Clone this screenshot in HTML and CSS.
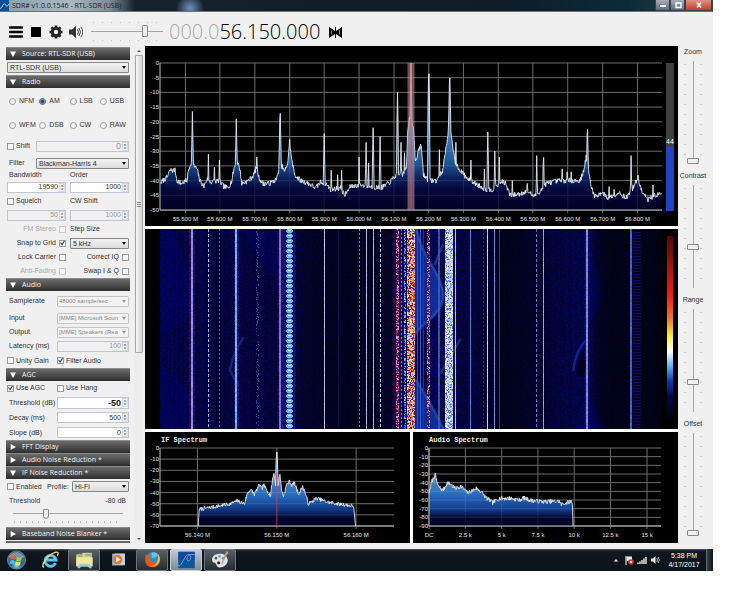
FILE: index.html
```html
<!DOCTYPE html>
<html lang="en">
<head>
    <meta charset="UTF-8">
    <meta name="viewport" content="width=device-width, initial-scale=1.0">
    <title>SDR# v1.0.0.1546 - RTL-SDR (USB)</title>
    <link rel="stylesheet" href="styles.css">
</head>
<body>
    <svg width="0" height="0" class="defs" aria-hidden="true">
        <symbol id="updown" viewBox="0 0 6 9">
            <rect x="0.5" y="0.5" width="5" height="8" fill="#f4f4f6" stroke="#c4c8d0" stroke-width="0.6"/>
            <path d="M1.5 3.6 3 1.8 4.5 3.6zM1.5 5.4 3 7.2 4.5 5.4z" fill="#6b7488"/>
        </symbol>
    </svg>

    <div class="desktop">
        <header class="titlebar">
            <svg class="app-icon" viewBox="0 0 9 11"><rect width="9" height="11" fill="#0d4f96"/><path d="M0 8C2 10 3 2 5 4s1 4 4 0" fill="none" stroke="#a8d8ff"/></svg>
            <span class="app-title">SDR# v1.0.0.1546 - RTL-SDR (USB)</span>
            <div class="window-buttons">
                <button aria-label="Minimize"><svg viewBox="0 0 10 8"><path d="M2 5h6" stroke="#fff" stroke-width="2"/></svg></button>
                <button aria-label="Restore"><svg viewBox="0 0 10 8"><path d="M3 2h5v4.500H3z" fill="none" stroke="#fff" stroke-width="1.400"/></svg></button>
                <button class="close" aria-label="Close"><svg viewBox="0 0 10 8"><path d="M3 1.500 7 6.500M7 1.500 3 6.500" stroke="#fff" stroke-width="1.600"/></svg></button>
            </div>
        </header>

        <div class="toolbar">
            <button aria-label="Menu"><svg viewBox="0 0 14 14"><path d="M0 2.500h14M0 7h14M0 11.500h14" stroke="#000" stroke-width="2.600"/></svg></button>
            <button aria-label="Stop"><svg viewBox="0 0 14 14"><path d="M2 2h10v10H2z"/></svg></button>
            <button aria-label="Settings"><svg viewBox="0 0 14 14"><circle cx="7" cy="7" r="3.700" fill="none" stroke="#222" stroke-width="3"/><path d="M7 .5v3M7 10.500v3M.5 7h3M10.500 7h3M2.400 2.400l2 2M9.600 9.600l2 2M11.600 2.400l-2 2M4.400 9.600l-2 2" stroke="#222" stroke-width="2.500"/></svg></button>
            <button aria-label="Mute"><svg viewBox="0 0 14 14"><path d="M0 4.500h3L7 1v12L3 9.500H0z" fill="#333"/><path d="M8.500 4.500q2 2.500 0 5M10 3q3 4 0 8M11.800 1.800q4 5.200 0 10.400" fill="none" stroke="#444"/></svg></button>
            <div class="volume"><input type="range" class="hrange" aria-label="Volume" value="78"></div>
            <div class="frequency"><span>000.0</span>56.150.000</div>
            <button aria-label="Center tuning"><svg viewBox="0 0 14 14"><path d="M1 2 7 6V2h1v4l6-4v11L8 9v4H7V9l-6 4z"/><path d="M3.500 5.500v4M11.500 5.500v4" stroke="#f0f0f0" stroke-width="0.600"/></svg></button>
        </div>

        <div class="workspace">
            <aside class="sidebar">
                <button class="section open">Source: RTL-SDR (USB)</button>
                <div class="row mid"><div class="select"><select aria-label="Source"><option>RTL-SDR (USB)</option></select></div></div>

                <button class="section open">Radio</button>
                <div class="modes">
                    <label><input type="radio" name="mode">NFM</label>
                    <label><input type="radio" name="mode" checked>AM</label>
                    <label><input type="radio" name="mode">LSB</label>
                    <label><input type="radio" name="mode">USB</label>
                    <label><input type="radio" name="mode">WFM</label>
                    <label><input type="radio" name="mode">DSB</label>
                    <label><input type="radio" name="mode">CW</label>
                    <label><input type="radio" name="mode">RAW</label>
                </div>
                <div class="row tall filter">
                    <label><input type="checkbox">Shift</label>
                    <div class="spin big off"><input type="text" value="0" aria-label="Shift" disabled><svg><use href="#updown"/></svg></div>
                </div>
                <div class="row filter">
                    <label class="text" for="filter">Filter</label>
                    <div class="select"><select id="filter"><option>Blackman-Harris 4</option></select></div>
                </div>
                <div class="row short halves">
                    <label class="text" for="bandwidth">Bandwidth</label>
                    <label for="order">Order</label>
                </div>
                <div class="row halves">
                    <div class="spin"><input type="text" id="bandwidth" value="19590"><svg><use href="#updown"/></svg></div>
                    <div class="spin"><input type="text" id="order" value="1000"><svg><use href="#updown"/></svg></div>
                </div>
                <div class="row halves">
                    <label><input type="checkbox">Squelch</label>
                    <label for="cwshift">CW Shift</label>
                </div>
                <div class="row halves">
                    <div class="spin off"><input type="text" value="50" aria-label="Squelch" disabled><svg><use href="#updown"/></svg></div>
                    <div class="spin off"><input type="text" id="cwshift" value="1000" disabled><svg><use href="#updown"/></svg></div>
                </div>
                <div class="row halves">
                    <label class="end muted">FM Stereo<input type="checkbox" disabled></label>
                    <label for="step">Step Size</label>
                </div>
                <div class="row halves">
                    <label class="end">Snap to Grid<input type="checkbox" checked></label>
                    <div class="select"><select id="step"><option>5 kHz</option></select></div>
                </div>
                <div class="row halves">
                    <label class="end">Lock Carrier<input type="checkbox"></label>
                    <label class="end">Correct IQ<input type="checkbox"></label>
                </div>
                <div class="row halves">
                    <label class="end muted">Anti-Fading<input type="checkbox" disabled></label>
                    <label class="end">Swap I &amp; Q<input type="checkbox"></label>
                </div>

                <button class="section open">Audio</button>
                <div class="row tall fields">
                    <label class="text" for="samplerate">Samplerate</label>
                    <div class="select off"><select id="samplerate" disabled><option>48000 sample/sec</option></select></div>
                </div>
                <div class="row fields">
                    <label class="text" for="input">Input</label>
                    <div class="select off"><select id="input" disabled><option>[MME] Microsoft Soun</option></select></div>
                </div>
                <div class="row fields">
                    <label class="text" for="output">Output</label>
                    <div class="select off"><select id="output" disabled><option>[MME] Speakers (Rea</option></select></div>
                </div>
                <div class="row fields">
                    <label class="text" for="latency">Latency (ms)</label>
                    <div class="spin off"><input type="text" id="latency" value="100" disabled><svg><use href="#updown"/></svg></div>
                </div>
                <div class="row mid fields">
                    <label><input type="checkbox">Unity Gain</label>
                    <label><input type="checkbox" checked>Filter Audio</label>
                </div>

                <button class="section open">AGC</button>
                <div class="row fields">
                    <label><input type="checkbox" checked>Use AGC</label>
                    <label><input type="checkbox">Use Hang</label>
                </div>
                <div class="row mid fields">
                    <label class="text" for="agc-threshold">Threshold (dB)</label>
                    <div class="spin big strong"><input type="text" id="agc-threshold" value="-50"><svg><use href="#updown"/></svg></div>
                </div>
                <div class="row mid fields">
                    <label class="text" for="decay">Decay (ms)</label>
                    <div class="spin"><input type="text" id="decay" value="500"><svg><use href="#updown"/></svg></div>
                </div>
                <div class="row mid fields">
                    <label class="text" for="slope">Slope (dB)</label>
                    <div class="spin"><input type="text" id="slope" value="0"><svg><use href="#updown"/></svg></div>
                </div>

                <button class="section">FFT Display</button>
                <button class="section">Audio Noise Reduction *</button>
                <button class="section open">IF Noise Reduction *</button>
                <div class="row mid profile">
                    <label><input type="checkbox">Enabled</label>
                    <label for="profile">Profile:</label>
                    <div class="select"><select id="profile"><option>Hi-Fi</option></select></div>
                </div>
                <div class="row level">
                    <label class="text" for="nr-threshold">Threshold</label>
                    <output for="nr-threshold">-80 dB</output>
                </div>
                <div class="nr-slider"><input type="range" class="hrange" id="nr-threshold" value="29"></div>
                <button class="section">Baseband Noise Blanker *</button>
                <div class="section-edge"></div>
            </aside>

            <div class="scrollbar"><i class="up"></i><div class="thumb"></div><i class="down"></i></div>

            <main class="displays">
                <section class="panel spectrum">
                    <svg class="chart" data-chart="main"></svg>
                    <div class="meter"><span>44</span><div class="meter-fill"></div></div>
                </section>
                <section class="panel waterfall">
                    <canvas id="waterfall"></canvas>
                    <div class="palette"></div>
                </section>
                <div class="pair">
                    <section class="panel small"><h2>IF Spectrum</h2><svg class="chart" data-chart="ifs"></svg></section>
                    <section class="panel small"><h2>Audio Spectrum</h2><svg class="chart" data-chart="audio"></svg></section>
                </div>
            </main>

            <div class="controls">
                <label>Zoom<span class="vslider"><input type="range" value="0"></span></label>
                <label>Contrast<span class="vslider"><input type="range" value="39"></span></label>
                <label>Range<span class="vslider"><input type="range" value="28"></span></label>
                <label>Offset<span class="vslider"><input type="range" value="0"></span></label>
            </div>
        </div>

        <footer class="taskbar">
            <button aria-label="Start">
                <svg viewBox="0 0 22 22"><defs><radialGradient id="orb" cy="0.8"><stop offset="0" stop-color="#6fe0f0"/><stop offset="0.6" stop-color="#1e6695"/><stop offset="1" stop-color="#456a86"/></radialGradient></defs><circle cx="11" cy="11" r="10" fill="url(#orb)" stroke="#8fa9b8" stroke-width="0.6"/><path d="M2 8Q11-3 20 8 11 11 2 8" fill="#fff" opacity="0.3"/><path d="M5 7q3-2 5.500 0l-1 4q-2.500-2-5.500 0z" fill="#f2602b"/><path d="M11.500 7.500q2.500 2 5.500 0l-1 4q-3 2-5.500 0z" fill="#9bd04a"/><path d="M4 12q3-2 5.300 0l-1 4q-2.300-1.500-5 0z" fill="#4cb5f0"/><path d="M10.200 12.500q2.500 2 5.500 0l-1 4q-3 1.500-5.500 0z" fill="#fbd545"/></svg>
            </button>
            <button aria-label="Internet Explorer">
                <svg viewBox="0 0 22 22"><path d="M16.500 14.500A6 6 0 1 1 17 11H7" fill="none" stroke="#5cc6f2" stroke-width="3.200"/><path d="M4 19C-1 18 8 5 16 2.500c4-1 4 1 2.500 4" fill="none" stroke="#f0e06a" stroke-width="1.400"/></svg>
            </button>
            <button class="running" aria-label="Explorer">
                <svg viewBox="0 0 22 22"><path d="M2 5h6l1-2h10v15H2z" fill="#e8cf76"/><path d="M4 4h5v4H4zM12 4h6v3h-6z" fill="#8fb98a"/><path d="M2 8h18v10H2z" fill="#f3e7a4"/><path d="M5 15h12l2 5h-3l-1-2H7l-1 2H3z" fill="#9ad0dd"/></svg>
            </button>
            <button aria-label="Media Player">
                <svg viewBox="0 0 22 22"><path d="M4 4h14v13H4z" fill="#9db4c8"/><path d="M7 4h11v12H7z" fill="#c4d2de"/><circle cx="10" cy="10.500" r="5.200" fill="#e9742a"/><path d="M8.500 7.500v6l5-3z" fill="#fff"/></svg>
            </button>
            <button class="running" aria-label="Firefox">
                <svg viewBox="0 0 22 22"><circle cx="11.500" cy="9.500" r="7.500" fill="#2d8fc7"/><path d="M10 3q5-2 8 3l-4 2-4 1z" fill="#62c6e8"/><path d="M3.500 4q1 2 3 2 3-1 4 1-3 1-2.500 4 2 3 5.500 1 1 2-2 3.500 6 0 5.500-6 0-4-2-6 4 3 4 7.500 0 8-8 8t-8-8q0-4 .5-7z" fill="#e8571e"/><path d="M17 4q4 5 1 10-3 5-9 4 9-1 8-14" fill="#f6b53c"/></svg>
            </button>
            <button class="active" aria-label="SDR#">
                <svg viewBox="0 0 22 22"><path d="M2 2h18v18H2z" fill="#0b55a0"/><path d="M2 2h18v9H2z" fill="#16479a"/><path d="M2 17C5 20 9 5 13 5s3 7 0 7-1-6 2-7 4 1 5 0" fill="none" stroke="#8bc6f2" stroke-width="0.800"/></svg>
            </button>
            <button class="running" aria-label="Paint">
                <svg viewBox="0 0 22 22"><path d="M10 4C4 4 1 8 2 12c1 3 3 1 4 3 1 3 2 5 6 4 5-1 7-5 7-8-1-5-4-7-9-7" fill="#dfe3e4"/><circle cx="6" cy="9" r="1.500" fill="#555e62"/><circle cx="10" cy="7" r="1.400" fill="#7b9fae"/><circle cx="14" cy="9" r="1.400" fill="#6d7b6c"/><circle cx="9" cy="14" r="1.700" fill="#1f272b"/><path d="M18 1q3 2 0 4l-5 11-1-1 4-11z" fill="#b3a48f"/></svg>
            </button>
            <div class="tray">
                <svg viewBox="0 0 10 10"><path d="M3 6.500 5 4l2 2.500z" fill="#eee"/></svg>
                <svg viewBox="0 0 10 10"><path d="M2 1v9" stroke="#fff"/><path d="M2.500 1.500H8V6H2.500z" fill="#e8e8e8"/><circle cx="7" cy="7" r="2.800" fill="#d33a3a"/><path d="M6 6l2 2M8 6 6 8" stroke="#fff" stroke-width="0.800"/></svg>
                <svg viewBox="0 0 10 10"><path d="M1 9V7.500M3 9V6.500M5 9V5M7 9V3.500M9 9V2" stroke="#eee" stroke-width="1.400"/></svg>
                <svg viewBox="0 0 10 10"><path d="M1 3.500h2L5.500 1v8L3 6.500H1z" fill="#eee"/><path d="M6.800 3q1.500 2 0 4M8.200 2q2.200 3 0 6" fill="none" stroke="#ddd" stroke-width="0.800"/></svg>
                <div class="clock"><time>5:38 PM</time><time>4/17/2017</time></div>
                <button class="show-desktop" aria-label="Show desktop"></button>
            </div>
        </footer>
    </div>
    <script src="app.js"></script>
</body>
</html>
```

FILE: styles.css
```css
* {
    box-sizing: border-box;
}
body {
    margin: 0;
    background: #fefefe;
    color: #333;
    font-family: "Liberation Sans", Arial, sans-serif;
    font-size: 7px;
    line-height: 10px;
}
button, input, select {
    font: inherit;
    color: inherit;
    margin: 0;
    padding: 0;
}
button {
    border: none;
    background: none;
}
button svg {
    display: block;
}
.defs {
    position: absolute;
}
.desktop {
    margin-right: 24px;
    background: #f0f0f0;
}

/* title bar */
.titlebar {
    display: flex;
    height: 12px;
    background:
        radial-gradient(circle at 190px 8px, #6f93bd 0, transparent 14px),
        linear-gradient(90deg, #8a9eac 0, #a9b8c2 70px, #7c8c98 110px, #15222d 135px, #101c28 70%, #0b2a37 88%, #39434b);
    border-bottom: 1px solid #66727b;
}
.app-icon {
    width: 9px;
    height: 11px;
}
.app-title {
    margin-left: 3px;
    font-family: "Open Sans", sans-serif;
    line-height: 11px;
    color: #222;
}
.window-buttons {
    display: flex;
    margin-left: auto;
    margin-right: 1px;
}
.window-buttons button {
    width: 15px;
    height: 11px;
    background: linear-gradient(#a5afb8, #5d6a76);
    border: 1px solid #394049;
    border-top: none;
    border-radius: 0 0 0 2px;
}
.window-buttons .close {
    width: 27px;
    background: linear-gradient(#dc9485, #c13a25);
    border-radius: 0 0 2px 0;
}
.window-buttons svg {
    width: 10px;
    height: 8px;
    margin: 0 auto;
}

/* toolbar */
.toolbar {
    display: flex;
    align-items: center;
    gap: 6px;
    height: 35px;
    padding: 4px 0 0 9px;
}
.toolbar button svg {
    width: 14px;
    height: 14px;
}
.volume {
    width: 72px;
    height: 21px;
    margin-left: 2px;
    padding: 3px 0;
    background:
        repeating-linear-gradient(90deg, #c4c4c4 0 1px, transparent 1px 9px) 2px 1px / 100% 1px no-repeat,
        repeating-linear-gradient(90deg, #c4c4c4 0 1px, transparent 1px 9px) 2px 19px / 100% 1px no-repeat;
}
.frequency {
    margin-right: 2px;
    font-family: "Open Sans", sans-serif;
    font-weight: 300;
    font-size: 20px;
    line-height: 24px;
    color: #000;
}
.frequency span {
    color: #aaa;
}
.hrange {
    display: block;
    appearance: none;
    width: 100%;
    height: 14px;
    background: linear-gradient(#a8a8a8, #a8a8a8) center / 100% 1px no-repeat;
}
.hrange::-webkit-slider-thumb {
    appearance: none;
    width: 6px;
    height: 12px;
    background: #eee;
    border: 1px solid #8c8c8c;
    border-radius: 1px;
}

/* left panel */
.workspace {
    display: flex;
    align-items: flex-start;
    padding-bottom: 6px;
}
.sidebar {
    width: 124px;
    margin-left: 6px;
}
.section {
    display: flex;
    align-items: center;
    width: 100%;
    height: 13px;
    padding-left: 4px;
    background: linear-gradient(#6c6c6c, #2e2e2e);
    color: #f2f2f2;
    font-family: "Open Sans", sans-serif;
    border-top: 1px solid #8a8a8a;
}
.section::before {
    content: "";
    width: 6px;
    height: 6px;
    margin-right: 6px;
    background: #fff;
    clip-path: polygon(10% 0, 100% 50%, 10% 100%);
}
.section.open::before {
    clip-path: polygon(0 10%, 100% 10%, 50% 100%);
}
.section-edge {
    height: 2px;
    margin-top: 1px;
    background: #666;
}
.row {
    display: grid;
    align-items: center;
    height: 14px;
    padding: 0 1px;
}
.row.short { height: 10px; }
.row.mid { height: 15px; }
.row.tall { height: 20px; }
.filter { grid-template-columns: 29px 1fr; }
.halves { grid-template-columns: 1fr 1fr; column-gap: 4px; }
.fields { grid-template-columns: 50px 1fr; }
.profile { grid-template-columns: 40px 25px 1fr; }
.level {
    grid-template-columns: 1fr auto;
    padding-right: 4px;
}
.row > * {
    min-width: 0;
}
.row label, .modes label {
    display: flex;
    align-items: center;
    gap: 2px;
    white-space: nowrap;
}
.row .text {
    padding-left: 2px;
}
.row .end {
    justify-content: flex-end;
    gap: 3px;
}
.row .muted {
    color: #aaa;
}
.modes {
    display: grid;
    grid-template-columns: repeat(4, 1fr);
    grid-auto-rows: 24px;
    padding: 1px 0 0 3px;
    margin-bottom: -1px;
}
.modes label {
    gap: 3px;
}
input[type="checkbox"], input[type="radio"] {
    appearance: none;
    flex: none;
    width: 7px;
    height: 7px;
    background: #f6f6f6;
    border: 1px solid #9a9a9a;
}
input[type="radio"] {
    border-radius: 50%;
}
input[type="radio"]:checked {
    background: radial-gradient(circle, #24467c 0 1px, #b7cbe2 3px);
    border-color: #56657a;
}
input[type="checkbox"]:disabled {
    border-color: #ccc;
}
input[type="checkbox"]:checked::before {
    content: "";
    display: block;
    width: 5px;
    height: 5px;
    background: #34497c;
    clip-path: polygon(0 45%, 20% 35%, 40% 60%, 80% 0, 100% 10%, 45% 100%);
}
.select {
    position: relative;
}
.select select {
    display: block;
    appearance: none;
    width: 100%;
    height: 11px;
    padding-left: 2px;
    background: linear-gradient(#f2f2f2, #dcdcdc);
    border: 1px solid #868686;
    border-radius: 1px;
    line-height: 9px;
    opacity: 1;
}
.select::after {
    content: "";
    position: absolute;
    right: 3px;
    top: 4px;
    border: 2px solid transparent;
    border-top: 3px solid #111;
    border-bottom: none;
}
.select.off select {
    background: #f3f3f3;
    border-color: #c4c4c4;
    color: #888;
    padding-left: 1px;
    font-size: 6px;
}
.select.off::after {
    border-top-color: #999;
}
.spin {
    display: flex;
    align-items: center;
    height: 11px;
    background: #fff;
    border: 1px solid #c2c6cc;
}
.spin input {
    flex: 1;
    width: 0;
    min-width: 0;
    height: 9px;
    border: none;
    background: none;
    text-align: right;
    padding-right: 1px;
}
.spin svg {
    flex: none;
    width: 6px;
    height: 9px;
}
.spin.big {
    font-size: 9px;
}
.spin.strong {
    height: 12px;
    font-weight: bold;
    color: #111;
}
.spin.off {
    background: #f0f0f0;
    color: #999;
}
.nr-slider {
    height: 19px;
    padding: 0 7px;
    background: repeating-linear-gradient(90deg, #bbb 0 1px, transparent 1px 6px) 8px 13px / 106px 2px no-repeat;
}
.nr-slider .hrange {
    height: 11px;
}
.nr-slider .hrange::-webkit-slider-thumb {
    height: 10px;
    border-radius: 1px 1px 3px 3px;
}
.scrollbar {
    display: flex;
    flex-direction: column;
    align-items: center;
    align-self: stretch;
    width: 9px;
    margin-left: 4px;
    background: #ececec;
}
.scrollbar i {
    border: 2px solid transparent;
    margin: 3px 0;
}
.scrollbar .up { border-bottom-color: #555; border-top: none; }
.scrollbar .down { border-top-color: #555; border-bottom: none; margin-top: auto; }
.scrollbar .thumb {
    width: 8px;
    height: 298px;
    background: linear-gradient(90deg, #f7f7f7, #d4d4d4);
    border: 1px solid #a6a6a6;
    border-radius: 1px;
}
.scrollbar .thumb::before {
    content: "";
    display: block;
    width: 4px;
    height: 5px;
    margin: 146px auto 0;
    background: repeating-linear-gradient(#888 0 1px, transparent 1px 2px);
}

/* spectrum and waterfall */
.displays {
    flex: 1;
    min-width: 0;
    display: flex;
    flex-direction: column;
    gap: 3px;
    margin: -1px 0 0 2px;
    background: #fff;
}
.panel {
    position: relative;
    background: #000;
    overflow: hidden;
}
.chart {
    display: block;
    width: 100%;
    height: 100%;
}
.chart text {
    fill: #e4e4e4;
    font-size: 6px;
}
.chart .x {
    text-anchor: middle;
}
.chart .y {
    text-anchor: end;
}
.spectrum { height: 180px; }
.waterfall { height: 200px; }
#waterfall {
    display: block;
    width: 100%;
    height: 100%;
}
.meter {
    position: absolute;
    right: 4px;
    top: 17px;
    width: 8px;
    height: 148px;
    background: #404040;
    display: flex;
    flex-direction: column;
    justify-content: flex-end;
    text-align: center;
    color: #fff;
}
.meter-fill {
    height: 43%;
    background: #2442c4;
}
.palette {
    position: absolute;
    right: 5px;
    top: 7px;
    width: 6px;
    height: 186px;
    background: linear-gradient(#550808 0, #8c1010 12%, #f01c1c 32%, #f07030 44%, #f8f040 54%, #fff 62%, #60b0f8 70%, #1038b0 78%, #000850 86%, #000 100%);
}
.pair {
    display: grid;
    grid-template-columns: 1fr 1fr;
    gap: 3px;
}
.small {
    height: 111px;
}
.small h2 {
    position: absolute;
    left: 16px;
    top: 3px;
    margin: 0;
    font: bold 7px/10px "Liberation Mono", monospace;
    color: #eee;
}

/* right sliders */
.controls {
    width: 35px;
    padding-right: 5px;
}
.controls label {
    display: flex;
    flex-direction: column;
    align-items: center;
    height: 124px;
}
.vslider {
    width: 18px;
    height: 103px;
    margin-top: 4px;
    background:
        repeating-linear-gradient(#c8c8c8 0 1px, transparent 1px 10px) 0 3px / 2px 98px no-repeat,
        repeating-linear-gradient(#c8c8c8 0 1px, transparent 1px 10px) 16px 3px / 2px 98px no-repeat;
}
.vslider input {
    display: block;
    appearance: none;
    writing-mode: vertical-lr;
    direction: rtl;
    width: 12px;
    height: 103px;
    margin: 0 auto;
    background: linear-gradient(#aaa, #aaa) center / 1px 100% no-repeat;
}
.vslider input::-webkit-slider-thumb {
    appearance: none;
    width: 12px;
    height: 6px;
    background: #f0f0f0;
    border: 1px solid #8a8a8a;
    border-radius: 1px;
}

/* taskbar */
.taskbar {
    display: flex;
    align-items: stretch;
    gap: 2px;
    height: 22px;
    background: linear-gradient(#4e5962 0, #10181f 2px, #0c1219);
}
.taskbar > button {
    width: 32px;
    border-radius: 2px;
}
.taskbar > button svg {
    width: 21px;
    height: 20px;
    margin: 0 auto;
}
.taskbar .running {
    background: linear-gradient(#555f66, #262c31);
    border: 1px solid #6c747a;
}
.taskbar .active {
    background: linear-gradient(#c0ccd6, #7d8892);
    border: 1px solid #c4ced6;
}
.tray {
    display: flex;
    align-items: center;
    gap: 3px;
    margin-left: auto;
    color: #fff;
}
.tray svg {
    width: 10px;
    height: 10px;
}
.clock {
    width: 38px;
    margin-left: 2px;
    text-align: center;
    line-height: 9px;
}
.clock time {
    display: block;
}
.show-desktop {
    width: 7px;
    height: 22px;
    background: linear-gradient(90deg, #3a434a, #0e1318);
    border-left: 1px solid #59636a;
}
```

FILE: app.js
```js
// small seeded generator so every redraw shows the same noise
function makeRandom(seed) {
    return () => {
        seed = (seed * 1664525 + 1013904223) % 4294967296;
        return seed / 4294967296;
    };
}

// floor and peaks are [bin, dB] pairs
const charts = {
    main: {
        bins: [159, 662], pad: [15, 17, 16, 16], min: -50, step: 5, noise: 1.8,
        ticks: [[184.5, '55.500 M'], [219, '55.600 M'], [254, '55.700 M'], [289, '55.800 M'], [323.5, '55.900 M'], [358.5, '56.000 M'], [393.5, '56.100 M'], [428.3, '56.200 M'], [463, '56.300 M'], [498, '56.400 M'], [532.6, '56.500 M'], [567.5, '56.600 M'], [602.6, '56.700 M'], [637.5, '56.800 M']],
        colors: [[0, '#cfe6ff'], [0.5, '#4a94e0'], [0.68, '#2868b4'], [0.78, '#0e2a70'], [0.86, '#040848'], [1, '#000028']],
        floor: [[159, -41], [162, -40], [166, -39], [169, -36.5], [174, -36.5], [176, -40], [180, -41], [186, -40], [188, -36], [190, -34], [193, -35], [196, -36], [199, -40], [203, -42], [206, -39.5], [210, -40.5], [218, -40], [223, -42], [227, -42.5], [231, -40], [233, -36], [236, -33], [239, -36], [241, -41], [248, -40], [253, -38], [256, -35], [258, -39], [262, -41], [269, -41], [276, -39.5], [278, -36], [281, -35], [284, -37], [287, -34], [289, -27], [291, -33], [294, -38], [300, -40], [308, -41], [315, -42.5], [320, -40.5], [325, -41], [330, -43], [340, -42.5], [344, -45], [350, -42], [360, -41.5], [370, -42], [380, -42.5], [388, -41], [396, -38], [402, -38], [406, -36], [407, -24], [409, -18], [413, -22], [415, -34], [418, -30], [420, -28], [421, -29], [423, -38], [428, -40], [436, -40], [442, -37], [446, -28], [449, -20], [452, -28], [455, -34], [460, -36.5], [466, -39], [475, -41], [480, -42], [486, -43], [493, -43], [502, -40], [505, -41], [510, -45], [520, -44.5], [527, -43.5], [534, -45.5], [540, -43.5], [546, -41], [552, -40.5], [560, -40], [570, -40], [580, -40], [584, -36], [586, -32], [588, -36], [591, -42], [595, -45.5], [602, -44], [608, -46], [619, -44], [626, -46], [632, -43], [638, -39], [642, -44], [648, -46.5], [655, -45], [662, -44.5]],
        peaks: [[191.5, -16.5], [207.5, -31], [213.5, -35.5], [218.5, -33], [235.5, -19], [256, -32], [279.3, -13.5], [289, -26], [323.5, -24], [330.5, -36.5], [337, -38], [341, -36.5], [358.5, -32], [365.5, -27], [368, -34], [372.5, -22], [379.5, -25], [397, -10], [400.5, -27], [404, -30.5], [410.5, 0], [428.3, 0], [439, -29.5], [449.3, -1.5], [455.5, -27], [470.5, -33], [484, -36], [487.5, -23.5], [494.5, -30], [499, -32], [512, -40], [527, -41], [536.5, -31.5], [543.3, -28.5], [562, -36], [567, -37], [571, -37], [587.3, -19], [609, -42], [614, -43], [631, -31.5], [653, -41.5]],
        band: [407, 414]
    },
    ifs: {
        bins: [160, 393], pad: [15, 16, 16, 17], min: -70, step: 10, noise: 3.5,
        ticks: [[197.3, '56.140 M'], [276.3, '56.150 M'], [355.3, '56.160 M']],
        colors: [[0, '#8cc0f4'], [0.4, '#5aa4f2'], [0.62, '#2c7fe4'], [0.8, '#123f96'], [0.9, '#020838'], [1, '#00002c']],
        floor: [[198, -70], [199, -55], [213, -53], [230, -50], [237, -47.5], [244, -50], [247, -41], [250, -37], [254, -41.5], [259, -33], [261.5, -37], [263, -33], [270, -43], [272, -28], [273.5, -23], [275, -33], [275.8, -22], [276.8, -38], [279.3, -22], [281, -38], [283, -43], [286, -33], [289, -30], [291.5, -34], [293.5, -31], [298, -41], [302, -35], [304, -38], [307.5, -50], [310, -49], [316, -45], [326.5, -48.5], [340, -50.5], [352.7, -52], [353.7, -60], [354.7, -70]],
        peaks: [[276.3, 0]],
        center: 276.3
    },
    audio: {
        bins: [428, 661], pad: [16, 16, 17, 17], min: -90, step: 10, noise: 5,
        ticks: [[428, 'DC'], [464.5, '2.5 k'], [501, '5 k'], [537.4, '7.5 k'], [573.8, '10 k'], [610.2, '12.5 k'], [647, '15 k']],
        colors: [[0.3, '#9ccaf0'], [0.45, '#5a9cdc'], [0.6, '#2f80e4'], [0.78, '#1a4cae'], [0.9, '#020838'], [1, '#00002c']],
        floor: [[428, -52], [431, -38], [434.3, -31], [437, -44], [442, -49], [446.7, -40], [450, -42], [454.6, -47], [460, -44], [467, -52], [475.6, -46.5], [481, -51], [485, -57], [492, -63], [499, -58], [509, -58], [519, -60], [523, -57.5], [530, -60.5], [543.5, -62], [559, -61.5], [560.7, -65], [571, -61.5], [572, -65], [572.7, -90]],
        peaks: []
    }
};

function floorAt(points, bin) {
    for (let i = 1; i < points.length; i++) {
        if (bin <= points[i][0]) {
            const [x0, y0] = points[i - 1];
            const [x1, y1] = points[i];
            return y0 + (y1 - y0) * (bin - x0) / (x1 - x0);
        }
    }
    return points[points.length - 1][1];
}

function drawChart(svg) {
    const name = svg.dataset.chart;
    const c = charts[name];
    const box = svg.getBoundingClientRect();
    const [left, top, right, bottom] = c.pad;
    const x1 = box.width - right;
    const y1 = box.height - bottom;
    const X = bin => left + (bin - c.bins[0]) / (c.bins[1] - c.bins[0]) * (x1 - left);
    const Y = db => top + db / c.min * (y1 - top);
    const random = makeRandom(7);

    const start = c.floor[0][0];
    const end = c.floor[c.floor.length - 1][0];
    let line = '';
    for (let bin = start; bin <= end; bin += 0.5) {
        let db = floorAt(c.floor, bin);
        if (bin > start + 1 && bin < end - 2) db += (random() - 0.5) * c.noise;
        for (const [at, level] of c.peaks) {
            const d = Math.abs(bin - at);
            if (d < 1) db = Math.max(db, level - d * 18);
        }
        line += `${line ? 'L' : 'M'}${X(bin).toFixed(1)} ${Y(Math.max(db, c.min)).toFixed(1)}`;
    }
    line += `L${X(end)} ${Y(c.floor[c.floor.length - 1][1])}`;

    let out = `<defs><linearGradient id="fill-${name}" gradientUnits="userSpaceOnUse" x1="0" x2="0" y1="${top}" y2="${y1}">`;
    out += c.colors.map(([at, color]) => `<stop offset="${at}" stop-color="${color}"/>`).join('');
    out += '</linearGradient></defs>';
    for (let db = 0; db >= c.min; db -= c.step) {
        out += `<path d="M${left} ${Y(db)}H${x1}" stroke="#6c6c6c"/>`;
        out += `<text class="y" x="${left - 1}" y="${Y(db) + 2}">${db}</text>`;
    }
    for (const [bin, label] of c.ticks) {
        out += `<path d="M${X(bin)} ${top}V${y1 + 3}" stroke="#6c6c6c"/>`;
        out += `<text class="x" x="${X(bin)}" y="${y1 + 11}">${label}</text>`;
    }
    out += `<path d="${line}L${X(end)} ${y1}L${X(start)} ${y1}Z" fill="url(#fill-${name})" fill-opacity="0.82"/>`;
    out += `<path d="M${left} ${top}V${y1}H${x1}" fill="none" stroke="#c0c0c0"/>`;
    out += `<path d="${line}" fill="none" stroke="#e4eaf2" stroke-width="0.9"/>`;
    if (c.band) {
        const [a, b] = c.band.map(X);
        out += `<rect x="${a}" y="${top}" width="${b - a}" height="${y1 - top}" fill="#c8969e" fill-opacity="0.55"/>`;
        out += `<path d="M${(a + b) / 2} ${top}V${y1}" stroke="#d84848" stroke-opacity="0.5"/>`;
    }
    if (c.center) {
        out += `<path d="M${X(c.center)} ${Y(-22)}V${y1}" stroke="#c83050" stroke-opacity="0.8"/>`;
    }
    svg.innerHTML = out;
}

// [bin, width, kind, color]
const signals = [
    [191.5, 6, 'soft', '80,20,90'], [191.5, 2, 'solid', '150,150,245'],
    [207.5, 1, 'dash', '170,190,255'], [218.5, 1, 'dots', '120,150,220'],
    [235.5, 5, 'soft', '30,50,170'], [235.5, 2, 'solid', '140,185,255'],
    [257, 3, 'sparse', '70,90,200'], [279.3, 5, 'soft', '70,20,140'],
    [279.3, 2, 'solid', '150,110,225'], [288.5, 14, 'soft', '10,40,150'],
    [288.5, 7, 'beads', '130,205,255'], [323.5, 1, 'solid', '205,215,255'],
    [338, 1, 'solid', '15,15,80'], [358.5, 1, 'dots', '170,190,240'],
    [365.5, 1, 'solid', '195,210,255'], [372.5, 1, 'solid', '185,205,255'],
    [379.5, 1, 'dash', '210,225,255'], [397, 9, 'soft', '70,10,80'],
    [397, 3, 'noise', 'red'], [400.5, 1, 'dots', '150,180,255'],
    [404, 2, 'noise', 'blue'], [410.5, 8, 'noise', 'hot'],
    [417, 1, 'solid', '40,90,220'], [420, 1, 'solid', '50,100,230'],
    [423, 1, 'solid', '20,60,190'], [428.3, 3, 'noise', 'red'],
    [439, 2, 'solid', '50,90,200'], [449, 8, 'noise', 'cool'],
    [455.5, 1, 'solid', '190,210,255'], [470.5, 1, 'solid', '100,140,220'],
    [483, 1, 'dots', '50,60,140'], [487.5, 1, 'solid', '225,230,255'],
    [494.5, 1, 'solid', '110,160,245'], [499, 1, 'solid', '45,65,170'],
    [536.5, 1, 'dash', '110,130,215'], [543.3, 1, 'solid', '165,180,245'],
    [587.3, 6, 'soft', '20,20,120'], [587.3, 2, 'solid', '140,150,230'],
    [631, 2, 'solid', '80,105,210'], [637, 8, 'rungs', '25,25,130']
];

const palettes = {
    hot: ['#ffe8d0', '#ffd08a', '#f88a4a', '#e03030', '#801830', '#f4a080', '#401850', '#8090e0'],
    cool: ['#fff', '#d8e0fc', '#a8c4f4', '#6c9cf0', '#e0dcb0', '#4868c8', '#b8c8f0'],
    red: ['#b03050', '#802860', '#d88090', '#501850', '#181048', '#c8a0d8', '#301860'],
    blue: ['#4078e0', '#1838a0', '#90b8f8', '#000840']
};

function drawWaterfall() {
    const canvas = document.getElementById('waterfall');
    const w = canvas.width = canvas.clientWidth;
    const h = canvas.height = canvas.clientHeight;
    const ctx = canvas.getContext('2d');
    const random = makeRandom(42);
    const left = 15;
    const scale = (w - 16 - left) / 503;
    const X = bin => left + (bin - 159) * scale;

    ctx.fillStyle = '#000';
    ctx.fillRect(0, 0, w, h);

    // background haze level across the band
    const haze = [[159, 76], [185, 70], [215, 62], [245, 66], [290, 58], [318, 36], [345, 30], [392, 42], [402, 84], [450, 74], [480, 54], [500, 28], [535, 42], [552, 62], [586, 76], [596, 40], [612, 22], [628, 28], [634, 50], [642, 24], [661, 22], [662, 8]];
    for (let x = left; x < w - 16; x++) {
        const level = floorAt(haze, 159 + (x - left) / scale);
        const column = 0.9 + random() * 0.2;
        for (let y = 0; y < h; y++) {
            const v = level * column * (0.65 + random() * 0.6);
            ctx.fillStyle = `rgb(${v / 20 | 0},${v / 14 | 0},${v | 0})`;
            ctx.fillRect(x, y, 1, 1);
        }
    }

    // drifting signals that sweep through the band
    ctx.save();
    ctx.setTransform(scale, 0, 0, 1, left - 159 * scale, 0);
    const sweep = new Path2D('M416 0C422 30 442 45 443 65 442 90 416 95 413 110L414 0ZM415 150C425 165 436 185 443 200H414Z');
    ctx.fillStyle = 'rgba(28,70,200,0.6)';
    ctx.fill(sweep);
    ctx.strokeStyle = 'rgba(90,150,255,0.3)';
    ctx.lineWidth = 2.5;
    ctx.stroke(new Path2D('M416 0C422 30 442 45 443 65 442 90 416 95 413 110M415 150C425 165 436 185 443 200M434 36 443 15M440 145 460 110'));
    ctx.fillStyle = 'rgba(0,0,130,0.3)';
    ctx.fill(new Path2D('M587 0C592 35 601 45 601 65 600 85 590 90 587 100ZM587 100Q575 115 573 140 580 155 587 152ZM587 150Q592 175 604 200H587Z'));
    ctx.fillStyle = 'rgba(0,0,12,0.7)';
    ctx.fill(new Path2D('M586 118Q578 125 576 145 582 150 586 148Z'));
    ctx.fillStyle = 'rgba(0,0,140,0.22)';
    ctx.fill(new Path2D('M160 0H174Q180 30 192 50V85Q170 100 160 108ZM160 140Q185 150 191 175V200H160ZM240 0Q262 40 279 50V0Z'));
    ctx.strokeStyle = 'rgba(60,90,220,0.35)';
    ctx.stroke(new Path2D('M243 108Q233 122 229 141 233 150 238 157M587 110Q575 122 573 142'));
    ctx.restore();

    for (const [bin, width, kind, color] of signals) {
        const x = Math.round(X(bin) - width / 2);
        for (let y = 0; y < h; y++) {
            const flicker = 0.8 + random() * 0.2;
            if (kind === 'solid') {
                ctx.fillStyle = `rgba(${color},${flicker})`;
                ctx.fillRect(x, y, width, 1);
            } else if (kind === 'soft') {
                ctx.fillStyle = `rgba(${color},${flicker * 0.6})`;
                ctx.fillRect(x + (random() * 2 | 0), y, width - 1, 1);
            } else if (kind === 'dash' && y % 5 < 3) {
                ctx.fillStyle = `rgba(${color},${flicker})`;
                ctx.fillRect(x, y, width, 1);
            } else if (kind === 'dots' && y % 4 < 2) {
                ctx.fillStyle = `rgba(${color},0.7)`;
                ctx.fillRect(x, y, width, 1);
            } else if (kind === 'sparse' && random() < 0.6) {
                ctx.fillStyle = `rgba(${color},0.7)`;
                ctx.fillRect(x + (random() * width | 0), y, 1, 1);
            } else if (kind === 'beads') {
                const bead = y % 5;
                const half = [2, 3, 3, 2, 1][bead];
                ctx.fillStyle = `rgba(${color},${bead === 4 ? 0.4 : 0.85})`;
                ctx.fillRect(x + 3 - half, y, half * 2 + 1, 1);
                if (bead === 1) {
                    ctx.fillStyle = '#d8f0ff';
                    ctx.fillRect(x + 2, y, 3, 1);
                }
            } else if (kind === 'rungs' && y % 3 === 0) {
                ctx.fillStyle = `rgba(${color},0.6)`;
                ctx.fillRect(x, y, width, 1);
            } else if (kind === 'noise') {
                const shades = palettes[color];
                for (let i = 0; i < width; i++) {
                    ctx.fillStyle = shades[random() * shades.length | 0];
                    ctx.fillRect(x + i, y, 1, 1);
                }
            }
        }
    }
}

function redraw() {
    document.querySelectorAll('.chart').forEach(drawChart);
    drawWaterfall();
}

window.addEventListener('resize', redraw);
redraw();
```
